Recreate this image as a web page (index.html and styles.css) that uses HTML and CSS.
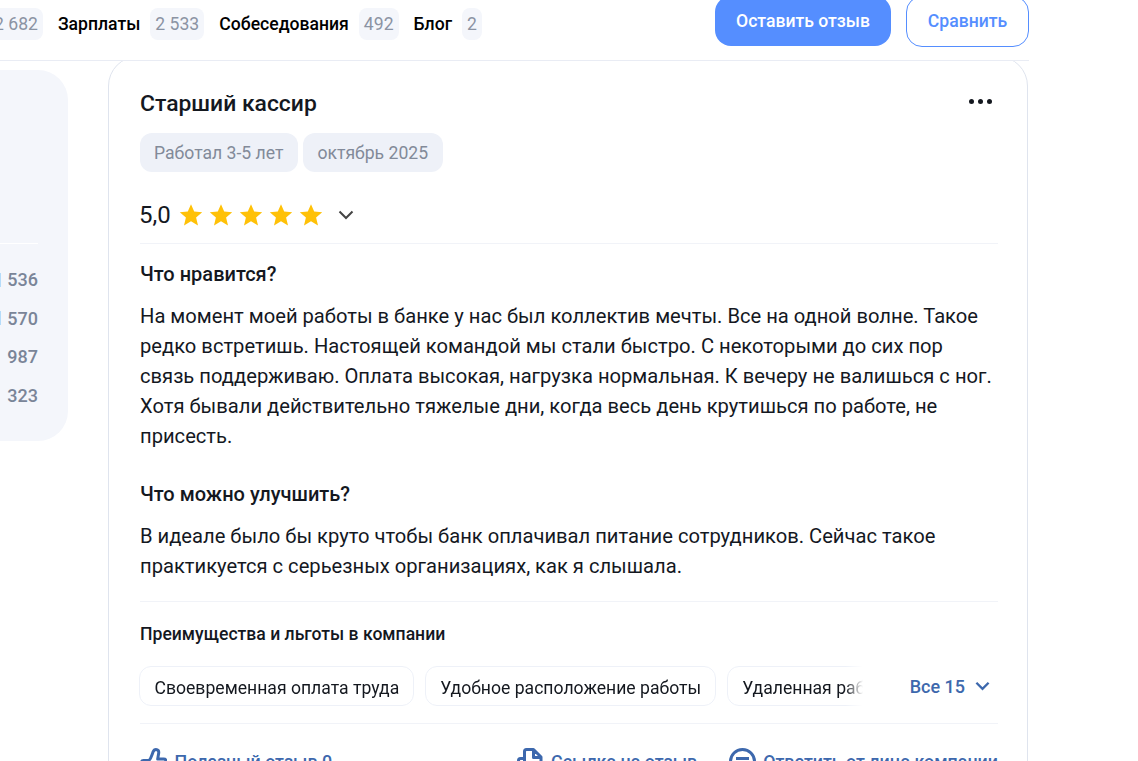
FILE: index.html
```html
<!DOCTYPE html>
<html lang="ru">
<head>
  <meta charset="UTF-8">
  <meta name="viewport" content="width=device-width, initial-scale=1">
  <title>Отзывы</title>
  <link rel="stylesheet" href="styles.css">
</head>
<body>

  <svg class="sprite" width="0" height="0">
    <symbol id="star" viewBox="0 0 24 24">
      <path d="M12 1.2l3.2 7.4 8 .7-6.1 5.3 1.9 7.9-7-4.2-7 4.2 1.9-7.9L.8 9.3l8-.7z"/>
    </symbol>
  </svg>

  <div class="page">
    <header class="topbar">
      <nav class="tabs">
        <span class="count">2 682</span>
        <a class="tab">Зарплаты</a>
        <span class="count">2 533</span>
        <a class="tab">Собеседования</a>
        <span class="count">492</span>
        <a class="tab">Блог</a>
        <span class="count">2</span>
      </nav>
      <div class="top-actions">
        <button class="btn btn-primary">Оставить отзыв</button>
        <button class="btn btn-outline">Сравнить</button>
      </div>
    </header>

    <main class="content">
      <aside class="sidebar">
        <div class="side-line"></div>
        <div class="stat"><i class="stat-bar"></i><span>536</span></div>
        <div class="stat"><i class="stat-bar"></i><span>570</span></div>
        <div class="stat"><span>987</span></div>
        <div class="stat"><span>323</span></div>
      </aside>

      <article class="card">
        <div class="card-head">
          <h2>Старший кассир</h2>
          <div class="dots"><i></i><i></i><i></i></div>
        </div>
        <div class="tags">
          <span class="tag">Работал 3-5 лет</span>
          <span class="tag">октябрь 2025</span>
        </div>
        <div class="rating">
          <span class="score">5,0</span>
          <div class="stars">
            <svg><use href="#star"/></svg>
            <svg><use href="#star"/></svg>
            <svg><use href="#star"/></svg>
            <svg><use href="#star"/></svg>
            <svg><use href="#star"/></svg>
          </div>
          <svg class="rating-chevron" viewBox="0 0 16 10"><path d="M1.5 1.5L8 8l6.5-6.5"/></svg>
        </div>

        <h3 class="first">Что нравится?</h3>
        <p>На момент моей работы в банке у нас был коллектив мечты. Все на одной волне. Такое редко встретишь. Настоящей командой мы стали быстро. С некоторыми до сих пор связь поддерживаю. Оплата высокая, нагрузка нормальная. К вечеру не валишься с ног. Хотя бывали действительно тяжелые дни, когда весь день крутишься по работе, не присесть.</p>

        <h3>Что можно улучшить?</h3>
        <p>В идеале было бы круто чтобы банк оплачивал питание сотрудников. Сейчас такое практикуется с серьезных организациях, как я слышала.</p>

        <div class="benefits">
          <h4>Преимущества и льготы в компании</h4>
          <div class="benefit-row">
            <div class="chips">
              <span class="chip">Своевременная оплата труда</span>
              <span class="chip">Удобное расположение работы</span>
              <span class="chip">Удаленная работа</span>
            </div>
            <a class="more">Все 15
              <svg viewBox="0 0 16 10"><path d="M1.5 1.5L8 8l6.5-6.5"/></svg>
            </a>
          </div>
        </div>

        <footer class="card-actions">
          <a class="action">
            <svg viewBox="0 0 27 27"><path d="M8.500 12.500H3.500a2 2 0 0 0-2 2v9a2 2 0 0 0 2 2h5zM8.500 12.500C10.500 12 11.500 8 13 4c.8-2 1.800-2.500 3-2.500 2 0 3 1.500 2.700 3.500l-1 6h6c2 0 3 1.500 2.600 3.500l-1.800 8c-.4 2-1.500 3-3.500 3h-12.500"/></svg>
            Полезный отзыв 0
          </a>
          <a class="action action-link">
            <svg viewBox="0 0 27 27"><path d="M7.500 10.500h-4a2 2 0 0 0-2 2V23a2 2 0 0 0 2 2h4zM7.500 25V3.500a2 2 0 0 1 2-2h7l7.500 7.500v14a2 2 0 0 1-2 2zM16.500 2v7.500h7"/></svg>
            Ссылка на отзыв
          </a>
          <a class="action">
            <svg viewBox="0 0 27 27"><circle cx="13.500" cy="13.500" r="12"/><path d="M7 10.500h13M7 16h13"/></svg>
            Ответить от лица компании
          </a>
        </footer>
      </article>
    </main>
  </div>

</body>
</html>
```

FILE: styles.css
```css
html, body {
  height: 761px;
  overflow: hidden;
}
body {
  margin: 0;
  background: #fff;
  font-family: Roboto, Arial, sans-serif;
  color: #14181f;
}
.sprite {
  position: absolute;
}
.page {
  width: 1029px;
}

/* top bar */
.topbar {
  display: flex;
  justify-content: space-between;
  box-sizing: border-box;
  height: 61px;
  border-bottom: 1px solid #e9ecf4;
}
.tabs {
  display: flex;
  align-items: center;
  height: 48px;
  margin-left: -11px;
}
.tab {
  font-size: 17.600px;
  font-weight: 500;
  color: #000;
  margin: 0 10px 0 15px;
}
.count {
  padding: 0 5px;
  height: 32px;
  line-height: 32px;
  background: #f4f6fb;
  border-radius: 8px;
  font-size: 17.600px;
  color: #8b93a3;
}
.top-actions {
  display: flex;
  align-items: flex-start;
  gap: 15px;
  margin-top: -4px;
}
.btn {
  font-family: inherit;
  font-size: 17.600px;
  font-weight: 500;
  border-radius: 16px;
  box-sizing: border-box;
  cursor: pointer;
}
.btn-primary {
  width: 176px;
  height: 50px;
  background: #558eff;
  border: 0;
  color: #fff;
}
.btn-outline {
  width: 123px;
  height: 51px;
  padding-bottom: 3px;
  background: #fff;
  border: 1px solid #558eff;
  color: #558eff;
}

/* main area */
.content {
  display: flex;
  align-items: flex-start;
  gap: 40px;
  height: 700px;
  margin-left: -40px;
  overflow: hidden;
}
.sidebar {
  width: 108px;
  height: 371px;
  margin-top: 9px;
  box-sizing: border-box;
  padding-top: 173px;
  padding-right: 30px;
  background: #f4f6fb;
  border-radius: 30px;
}
.side-line {
  height: 1px;
  background: #fff;
  margin-bottom: 16.500px;
}
.stat {
  display: flex;
  align-items: center;
  justify-content: flex-end;
  gap: 6px;
  height: 38.500px;
  font-size: 18px;
  font-weight: 500;
  color: #7a8598;
}
.stat-bar {
  flex: 1;
  height: 14px;
  background: #b5dcfa;
}

/* review card */
.card {
  width: 920px;
  height: 760px;
  margin-top: -5px;
  box-sizing: border-box;
  padding: 33px 29px 0 31px;
  border: 1px solid #dfe4ee;
  border-radius: 30px 30px 0 0;
}
.card-head {
  display: flex;
  justify-content: space-between;
  align-items: center;
  height: 26px;
}
.card-head h2 {
  margin: 0;
  font-size: 22.900px;
  font-weight: 500;
}
.dots {
  display: flex;
  gap: 4px;
  margin-right: 6px;
  margin-top: -4px;
}
.dots i {
  width: 5px;
  height: 5px;
  border-radius: 50%;
  background: #14181f;
}
.tags {
  display: flex;
  gap: 5px;
  margin: 17px 0 0 -0.500px;
}
.tag {
  padding: 0 14.500px;
  height: 39px;
  line-height: 41px;
  background: #eef1f8;
  border-radius: 12px;
  font-size: 17.600px;
  color: #828a99;
}
.rating {
  display: flex;
  align-items: center;
  box-sizing: border-box;
  height: 72px;
  padding-top: 14px;
  border-bottom: 1px solid #f1f3f8;
}
.score {
  font-size: 24px;
  width: 40px;
  margin-left: -1px;
}
.stars {
  display: flex;
  gap: 6px;
}
.stars svg {
  width: 24px;
  height: 24px;
  fill: #ffc107;
}
.rating-chevron {
  width: 16px;
  height: 10px;
  margin-left: 15px;
}
.rating-chevron, .more svg {
  fill: none;
  stroke: #444;
  stroke-width: 2;
}
h3 {
  margin: 31px 0 0;
  font-size: 20px;
  line-height: 24px;
  font-weight: 500;
}
h3.first {
  margin-top: 18px;
}
.card p {
  margin: 15px 0 0;
  font-size: 20.160px;
  line-height: 30px;
}

/* benefits */
.benefits {
  margin-top: 20px;
  padding-top: 22px;
  border-top: 1px solid #f1f3f8;
  border-bottom: 1px solid #f1f3f8;
}
h4 {
  margin: 0;
  font-size: 17.600px;
  line-height: 20px;
  font-weight: 500;
}
.benefit-row {
  display: flex;
  justify-content: space-between;
  align-items: center;
  margin: 22px 0 17px -1px;
}
.chips {
  display: flex;
  gap: 11px;
  width: 724px;
  overflow: hidden;
  -webkit-mask-image: linear-gradient(to left, transparent, #000 18px);
  mask-image: linear-gradient(to left, transparent, #000 18px);
}
.chip {
  flex: none;
  height: 40px;
  line-height: 42px;
  box-sizing: border-box;
  padding: 0 13.500px 0 14.500px;
  border: 1px solid #eef1f8;
  border-radius: 12px;
  font-size: 17.600px;
  color: #14181f;
}
.more {
  display: flex;
  align-items: center;
  gap: 10px;
  margin-right: 8px;
  font-size: 18px;
  font-weight: 500;
  color: #3d68ad;
}
.more svg {
  width: 15px;
  height: 10px;
  stroke: #3d68ad;
  stroke-width: 2.500;
}

/* actions */
.card-actions {
  display: flex;
  align-items: center;
  margin-top: 24px;
}
.action {
  display: flex;
  align-items: center;
  gap: 7.500px;
  font-size: 17.850px;
  font-weight: 500;
  color: #3d68ad;
  white-space: nowrap;
}
.action svg {
  flex: none;
  width: 27px;
  height: 27px;
  fill: none;
  stroke: #3d68ad;
  stroke-width: 3;
  stroke-linejoin: round;
}
.action-link {
  margin-left: auto;
  margin-right: 31.500px;
}
```
